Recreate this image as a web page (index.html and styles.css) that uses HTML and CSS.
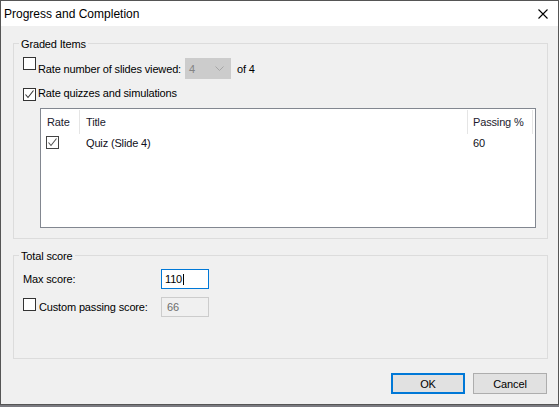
FILE: index.html
```html
<!DOCTYPE html>
<html>
<head>
<meta charset="utf-8">
<link rel="stylesheet" href="styles.css">
</head>
<body>
<div class="window">
  <div class="titlebar">
    <span class="title">Progress and Completion</span>
    <svg class="close" width="10" height="10" viewBox="0 0 10 10"><path d="M0.5 0.5 L9.5 9.5 M9.5 0.5 L0.5 9.5" stroke="#000" stroke-width="1.1" fill="none"/></svg>
  </div>
  <div class="content">
    <div class="group g1">
      <div class="legend">Graded Items</div>
      <div class="row r1">
        <span class="cb cb-top"></span>
        <span class="lbl lbl-slides">Rate number of slides viewed:</span>
        <div class="combo"><span class="combo-val">4</span><svg class="chev" width="9" height="6" viewBox="0 0 9 6"><path d="M0.5 0.5 L4.5 4.5 L8.5 0.5" stroke="#a6a6a6" stroke-width="1" fill="none"/></svg></div>
        <span class="lbl of">of 4</span>
      </div>
      <div class="row r2">
        <span class="cb"><svg width="11" height="11" viewBox="0 0 11 11"><path d="M1.5 5.5 L4 8.5 L9.5 1.5" stroke="#333" stroke-width="1.1" fill="none"/></svg></span>
        <span class="lbl lbl-quiz">Rate quizzes and simulations</span>
      </div>
      <div class="list">
        <div class="lhead">
          <div class="col c1">Rate</div>
          <div class="col c2">Title</div>
          <div class="col c3">Passing %</div>
        </div>
        <div class="lrow">
          <div class="col c1"><span class="cb cb-list"><svg width="11" height="11" viewBox="0 0 11 11"><path d="M1.5 5.5 L4 8.5 L9.5 1.5" stroke="#555" stroke-width="1.1" fill="none"/></svg></span></div>
          <div class="col c2">Quiz (Slide 4)</div>
          <div class="col c3">60</div>
        </div>
      </div>
    </div>
    <div class="group g2">
      <div class="legend">Total score</div>
      <div class="frow f1">
        <span class="flabel">Max score:</span>
        <div class="input active">110<span class="caret"></span></div>
      </div>
      <div class="frow f2">
        <span class="cb cb-f2"></span>
        <span class="flabel flabel2">Custom passing score:</span>
        <div class="input disabled">66</div>
      </div>
    </div>
    <div class="buttons">
      <button class="btn default">OK</button>
      <button class="btn">Cancel</button>
    </div>
  </div>
</div>
</body>
</html>
```

FILE: styles.css
```css
* { box-sizing: border-box; }
html, body { margin: 0; padding: 0; }
body {
  background: #7a7a80;
  font-family: "Liberation Sans", Arial, sans-serif;
  font-size: 11px;
  letter-spacing: -0.15px;
  color: #000;
  width: 559px;
  height: 407px;
  overflow: hidden;
}
.window {
  width: 559px;
  height: 405px;
  border: 1px solid #555555;
  display: flex;
  flex-direction: column;
  background: #f0f0f0;
}
.titlebar {
  height: 25px;
  background: #fff;
  display: flex;
  align-items: center;
  justify-content: space-between;
  padding-left: 3px;
  padding-right: 10px;
}
.title { font-size: 12px; letter-spacing: 0; line-height: 15px; margin-top: 1px; }
.close { display: block; margin-top: 1px; }
.content {
  flex: 1;
  padding: 17px 10px 0 12px;
  display: flex;
  flex-direction: column;
}
.group {
  border: 1px solid #dcdcdc;
  padding: 0 0 0 9px;
}
.legend {
  display: table;
  line-height: 16px;
  height: 16px;
  margin: -8px 0 0 -4px;
  padding: 0 2px;
  background: #f0f0f0;
}
.g1 { height: 196px; }
.row { display: flex; }
.r1 { height: 21px; margin-top: 6px; align-items: center; }
.cb {
  width: 13px;
  height: 13px;
  border: 1px solid #333333;
  background: #fff;
  flex: none;
  display: flex;
  align-items: center;
  justify-content: center;
}
.cb svg { display: block; }
.cb-top { align-self: flex-start; margin-top: -1px; }
.lbl { line-height: 14px; white-space: nowrap; }
.lbl-slides { width: 149px; padding-left: 2px; }
.combo {
  width: 46px;
  height: 21px;
  background: #cccccc;
  border: 1px solid #cccccc;
  display: flex;
  align-items: center;
  justify-content: space-between;
  padding: 0 6px 0 3px;
  color: #838383;
  flex: none;
}
.chev { display: block; margin-top: 1px; }
.of { margin-left: 6px; }
.r2 { height: 13px; margin-top: 9px; align-items: flex-start; }
.lbl-quiz { padding-left: 2px; line-height: 13px; margin-top: -1px; }
.list {
  margin-top: 7px;
  margin-left: 17px;
  width: 496px;
  height: 120px;
  border: 1px solid #828790;
  background: #fff;
}
.lhead { display: flex; height: 25px; padding-top: 1px; color: #1b1b2e; }
.lhead .col { height: 24px; border-right: 1px solid #e5e5e5; display: flex; align-items: center; white-space: nowrap; }
.col { padding-left: 6px; }
.c1 { width: 39px; }
.c2 { width: 388px; }
.c3 { width: 65px; padding-left: 5px; }
.lrow { display: flex; height: 17px; align-items: center; color: #101020; }
.lrow .col { display: flex; align-items: center; height: 17px; }
.lrow .c1 { padding-left: 5px; }
.cb-list { border-color: #444; }
.g2 { margin-top: 16px; height: 104px; }
.frow { display: flex; align-items: center; height: 20px; }
.f1 { margin-top: 5px; }
.f2 { margin-top: 8px; }
.flabel { width: 138px; line-height: 14px; white-space: nowrap; }
.flabel2 { width: 125px; padding-left: 3px; }
.cb-f2 { align-self: flex-start; margin-top: 1px; }
.input {
  width: 48px;
  height: 20px;
  padding-left: 3px;
  display: flex;
  align-items: center;
  line-height: 14px;
  flex: none;
}
.active { border: 1px solid #0078d7; background: #fff; }
.caret { display: inline-block; width: 1px; height: 11px; background: #000; margin-left: 1px; }
.disabled { border: 1px solid #cccccc; background: #f0f0f0; color: #6d6d6d; padding-left: 5px; }
.buttons {
  display: flex;
  justify-content: flex-end;
  gap: 8px;
  margin-top: 14px;
  padding-right: 1px;
}
.btn {
  width: 74px;
  height: 21px;
  background: #e1e1e1;
  border: 1px solid #adadad;
  font-family: "Liberation Sans", Arial, sans-serif;
  font-size: 11px;
  letter-spacing: -0.15px;
  color: #000;
  padding: 0;
  margin: 0;
  line-height: 14px;
}
.btn.default { border: 2px solid #0078d7; }
```
